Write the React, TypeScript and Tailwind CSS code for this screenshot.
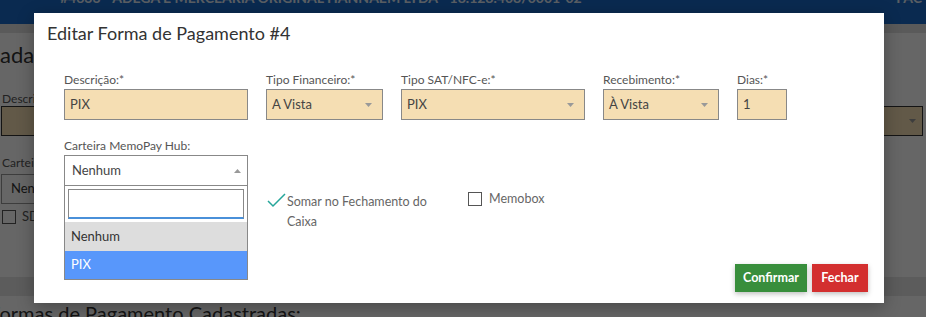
import React from "react";

const Arrow = ({ up = false }: { up?: boolean }) => (
  <svg width="7" height="4" viewBox="0 0 7 4" className="shrink-0">
    {up ? <path d="M0 4 L3.5 0 L7 4 Z" fill="#999" /> : <path d="M0 0 L7 0 L3.5 4 Z" fill="#999" />}
  </svg>
);

function Field({
  label,
  value,
  width,
  select = false,
}: {
  label: string;
  value: string;
  width: string;
  select?: boolean;
}) {
  return (
    <div className={`flex flex-col ${width}`}>
      <label className="text-[12px] leading-[15px] text-[#555]">{label}</label>
      <div className="mt-[2px] flex h-[31px] items-center justify-between border border-[#888] bg-[#f5deb3] pl-[5px] pr-[10px] text-[13px] text-[#444]">
        <span>{value}</span>
        {select && <Arrow />}
      </div>
    </div>
  );
}

export default function App() {
  return (
    <div className="relative h-[317px] w-[926px] overflow-hidden bg-white font-['Lato',sans-serif]">
      {/* Page behind the modal */}
      <div className="flex h-[24px] items-start justify-between overflow-hidden bg-[#1969c8] pl-[60px] pr-[4px]">
        <span className="-mt-[13px] text-[14px] font-bold text-[#e0ecf8]">
          #4633 - ADEGA E MERCEARIA ORIGINAL HANNAEM LTDA - 18.128.408/0001-02
        </span>
        <span className="-mt-[13px] text-[14px] font-bold text-[#e0ecf8]">FAC</span>
      </div>
      <div className="h-[9px] bg-[#e2e2e2]" />
      <div className="pt-[8px] text-[22px] leading-[28px] text-[#333]">adas</div>
      <div className="mt-[23px] pl-[2px] text-[12px] leading-[14px] text-[#555]">Descrição:*</div>
      <div className="ml-[1px] flex h-[30px] w-[922px] items-center justify-end border border-[#333] bg-[#f5deb3] pr-[6px]">
        <Arrow />
      </div>
      <div className="mt-[20px] pl-[2px] text-[12px] leading-[14px] text-[#555]">Carteira MemoPay Hub:</div>
      <div className="mt-[4px] ml-[1px] flex h-[30px] w-[300px] items-center border border-[#999] pl-[9px] text-[13px] text-[#333]">
        Nenhum
      </div>
      <div className="mt-[5px] flex h-[16px] items-center gap-[6px] pl-[2px] text-[13px] text-[#555]">
        <span className="h-[14px] w-[14px] border border-[#555]" />
        SDK
      </div>
      <div className="mt-[52px] h-[19px] bg-[#e6e6e6]" />
      <div className="-ml-[11px] mt-[4px] text-[20px] leading-[26px] text-[#333]">
        Formas de Pagamento Cadastradas:
      </div>

      {/* Overlay + modal */}
      <div className="absolute inset-0 bg-black/60">
        <div className="ml-[34px] mt-[13px] flex h-[290px] w-[850px] flex-col bg-white shadow-[0_4px_16px_rgba(0,0,0,0.3)]">
          <h2 className="pl-[13px] pt-[9px] text-[18px] leading-[23px] text-[#333]">
            Editar Forma de Pagamento #4
          </h2>

          <div className="mt-[27px] flex gap-[18px] pl-[30px]">
            <Field label="Descrição:*" value="PIX" width="w-[184px]" />
            <Field label="Tipo Financeiro:*" value="A Vista" width="w-[117px]" select />
            <Field label="Tipo SAT/NFC-e:*" value="PIX" width="w-[184px]" select />
            <Field label="Recebimento:*" value="À Vista" width="w-[116px]" select />
            <Field label="Dias:*" value="1" width="w-[50px]" />
          </div>

          <div className="mt-[18px] flex pl-[30px]">
            <div className="flex w-[184px] flex-col">
              <label className="text-[12px] leading-[15px] text-[#555]">Carteira MemoPay Hub:</label>
              <div className="mt-[2px] flex h-[31px] items-center justify-between border border-[#888] bg-white pl-[7px] pr-[6px] text-[13px] text-[#444]">
                <span>Nenhum</span>
                <Arrow up />
              </div>
              <div className="flex flex-col border border-t-0 border-[#888] bg-white">
                <div className="p-[3px]">
                  <div className="h-[30px] border border-b-2 border-[#888] border-b-[#4a90d9] bg-white" />
                </div>
                <div className="flex h-[29px] items-center bg-[#dddddd] pl-[6px] text-[13px] text-[#333]">
                  Nenhum
                </div>
                <div className="flex h-[28px] items-center bg-[#5897fb] pl-[6px] text-[13px] text-white">
                  PIX
                </div>
              </div>
            </div>

            <div className="ml-[19px] mt-[54px] flex w-[170px] items-start">
              <svg width="20" height="16" viewBox="0 0 20 16" className="mt-[1px] shrink-0">
                <path d="M1 8 L6 13 L18 1" fill="none" stroke="#26a69a" strokeWidth="1.5" />
              </svg>
              <span className="text-[12.5px] leading-[20px] text-[#666]">
                Somar no Fechamento do Caixa
              </span>
            </div>

            <div className="ml-[31px] mt-[53px] flex h-[16px] items-center">
              <span className="h-[14px] w-[14px] border border-[#555]" />
              <span className="ml-[7px] text-[12.5px] leading-[20px] text-[#666]">Memobox</span>
            </div>
          </div>

          <div className="-mt-[16px] flex justify-end gap-[5px] pr-[16px]">
            <button className="h-[28px] w-[72px] bg-[#388e3c] text-[12.5px] font-bold text-white shadow-[0_2px_5px_rgba(0,0,0,0.25)]">
              Confirmar
            </button>
            <button className="h-[28px] w-[56px] bg-[#d32f2f] text-[12.5px] font-bold text-white shadow-[0_2px_5px_rgba(0,0,0,0.25)]">
              Fechar
            </button>
          </div>
        </div>
      </div>
    </div>
  );
}
